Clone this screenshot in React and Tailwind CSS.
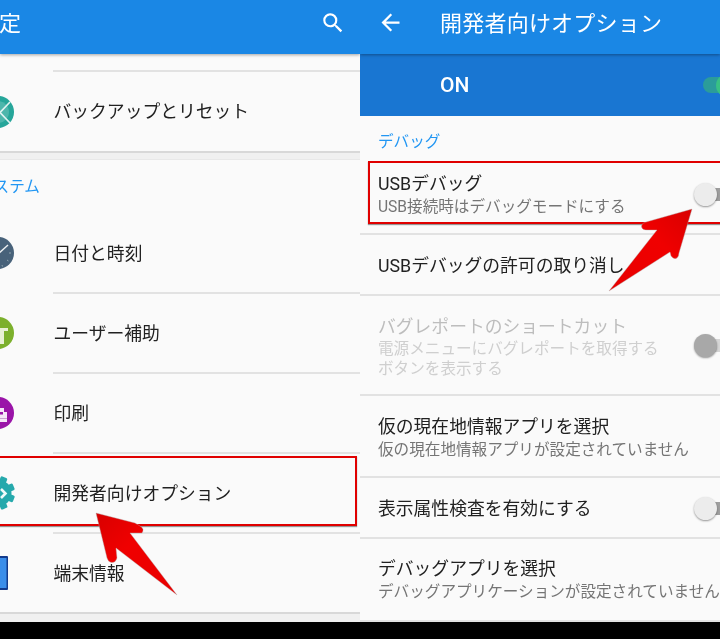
const font = { fontFamily: '"Roboto", "Noto Sans CJK JP", sans-serif' };

function BackupIcon() {
  return (
    <svg viewBox="0 0 32 32" className="w-8 h-8 shrink-0">
      <circle cx="16" cy="16" r="16" fill="#26a69a" />
      <circle cx="16" cy="16" r="11" fill="#4db6ac" />
      <path d="M8 6 L28 27 M28 6 L8 27" stroke="#e0f2f1" strokeWidth="1.6" />
    </svg>
  );
}

function ClockIcon() {
  return (
    <svg viewBox="0 0 32 32" className="w-8 h-8 shrink-0">
      <circle cx="16" cy="16" r="16" fill="#48627a" />
      <path d="M15 18 L26 8" stroke="#eceff1" strokeWidth="1.4" />
      <path d="M15 18 L10 12" stroke="#cfd8dc" strokeWidth="1.4" />
      <path d="M27 16 h2 M25 23 l1.5 1 M20 28 l.5 1.5" stroke="#90a4ae" strokeWidth="1" />
    </svg>
  );
}

function AccessIcon() {
  return (
    <svg viewBox="0 0 32 32" className="w-8 h-8 shrink-0">
      <circle cx="16" cy="16" r="16" fill="#7cb02c" />
      <path d="M6 11 H26 V14 H22 V27 H12 V14 H6 Z" fill="#e8f0d4" />
    </svg>
  );
}

function PrintIcon() {
  return (
    <svg viewBox="0 0 32 32" className="w-8 h-8 shrink-0">
      <circle cx="16" cy="16" r="16" fill="#9a14a8" />
      <path d="M11 11 H22 V15 H25 V25 H7 V15 H11 Z" fill="#f5e6f7" />
      <rect x="13" y="15" width="8" height="2.5" fill="#9a14a8" />
      <rect x="7" y="21" width="18" height="1" fill="#c9a0d0" />
    </svg>
  );
}

function DevIcon() {
  return (
    <svg viewBox="-1 -1 34 34" className="w-[34px] h-[34px] -m-px shrink-0">
      <circle cx="16" cy="16" r="13.5" fill="#26a9ac" />
      {[0, 45, 90, 135].map((deg) => (
        <rect key={deg} x="12.5" y="-1" width="7" height="34" rx="1.5" fill="#26a9ac" transform={`rotate(${deg + 22} 16 16)`} />
      ))}
      <path d="M19 12 L23.5 16.5 L19 21" fill="none" stroke="#f0fafa" strokeWidth="2.6" />
    </svg>
  );
}

function TabletIcon() {
  return (
    <svg viewBox="0 0 32 34" className="w-8 h-[34px] shrink-0">
      <rect x="0" y="0" width="26" height="34" rx="1" fill="#123a8c" />
      <rect x="0" y="2" width="24.5" height="30" fill="#3a8eea" />
    </svg>
  );
}

function Section({ children }) {
  return <div className="text-[15.6px] text-[#2196f3]">{children}</div>;
}

function MenuRow({ icon, label, height = "h-[78px]" }) {
  return (
    <div className={`${height} shrink-0 flex items-center`}>
      <div className="-ml-[18px] mr-[39.5px]">{icon}</div>
      <div className="pt-0.5 text-[17.8px] text-[#212121]">{label}</div>
    </div>
  );
}

function Divider() {
  return <div className="ml-[53px] h-0.5 shrink-0 bg-[#e2e2e2]" />;
}

function Toggle({ thumb = "bg-[#ececec]", track = "bg-[#9e9e9e]" }) {
  return (
    <div className="relative w-[30px] h-[23px] -mr-1 shrink-0">
      <div className={`absolute left-3 right-0 top-[5px] h-[13px] ${track}`} />
      <div className={`absolute left-0 top-0 w-[23px] h-[23px] rounded-full shadow-[0_1px_2px_rgba(0,0,0,0.4)] ${thumb}`} />
    </div>
  );
}

function OnToggle() {
  return (
    <div className="relative w-[17px] h-[23px] shrink-0">
      <div className="absolute left-0 right-0 top-[3px] h-4 rounded-l-full bg-[#2b9c9a]" />
      <div className="absolute left-[13px] top-0 w-[23px] h-[23px] rounded-full bg-[#38c184]" />
    </div>
  );
}

function LeftPanel() {
  return (
    <div className="relative w-[360px] h-full overflow-hidden bg-[#fafafa] flex flex-col">
      <header className="relative z-10 h-[54px] shrink-0 bg-[#1a87e5] flex items-center justify-between pr-[14px] shadow-[0_1px_3px_rgba(0,0,0,0.35)]">
        <span className="-ml-[23px] text-[22px] text-white pb-2">設定</span>
        <svg viewBox="0 0 24 24" className="w-[26px] h-[26px] fill-white mb-[8px]">
          <path d="M15.5 14h-.79l-.28-.27A6.471 6.471 0 0 0 16 9.5 6.5 6.5 0 1 0 9.5 16c1.61 0 3.09-.59 4.23-1.57l.27.28v.79l5 4.99L20.49 19l-4.99-5zm-6 0C7.01 14 5 11.99 5 9.5S7.01 5 9.5 5 14 7.01 14 9.5 11.99 14 9.5 14z" />
        </svg>
      </header>
      <div className="h-4 shrink-0" />
      <Divider />
      <MenuRow icon={<BackupIcon />} label="バックアップとリセット" height="h-[79px]" />
      <div className="h-[9px] shrink-0 bg-[#f0f0f0] border-t-2 border-[#d8d8d8] border-b border-b-[#e8e8e8]" />
      <div className="h-[54px] shrink-0 flex items-center pt-0.5 -ml-[22px]">
        <Section>システム</Section>
      </div>
      <MenuRow icon={<ClockIcon />} label="日付と時刻" />
      <Divider />
      <MenuRow icon={<AccessIcon />} label="ユーザー補助" />
      <Divider />
      <MenuRow icon={<PrintIcon />} label="印刷" />
      <Divider />
      <MenuRow icon={<DevIcon />} label="開発者向けオプション" />
      <Divider />
      <MenuRow icon={<TabletIcon />} label="端末情報" />
      <div className="h-[10px] shrink-0 bg-[#f0f0f0] border-t-2 border-[#d8d8d8]" />
      <div className="flex-1 bg-black" />
      <div className="absolute -left-1 top-[456px] w-[361px] h-[70px] border-2 border-[#e00000] shadow-[0_1px_1px_rgba(0,0,0,0.4)]" />
      <svg viewBox="0 0 100 100" className="absolute left-[90px] top-[508px] w-[100px] h-[100px]">
        <defs>
          <linearGradient id="arrowLeft" x1="0" y1="0" x2="1" y2="1">
            <stop offset="0" stopColor="#d80000" />
            <stop offset="0.4" stopColor="#f00000" />
            <stop offset="1" stopColor="#e80000" />
          </linearGradient>
        </defs>
        <path
          d="M6 5 L45 15 L50 18 Q55 21 52 25 L40 25 L87 87 L26 40 L27 50 Q25 56 20 54 Q18 53 17 50 Z"
          fill="url(#arrowLeft)"
          stroke="#b0b0b0"
          strokeWidth="0.4"
        />
      </svg>
    </div>
  );
}

function SettingRow({ title, sub, right, className, subGap = "mt-0.5", disabled = false }) {
  return (
    <div className={`shrink-0 flex justify-between pl-[18px] border-b-2 border-[#e2e2e2] ${className}`}>
      <div>
        <div className={`text-[17.8px] leading-[22px] ${disabled ? "text-[#bdbdbd]" : "text-[#212121]"}`}>{title}</div>
        {sub && (
          <div className={`${subGap} text-[15.6px] leading-5 ${disabled ? "text-[#cfcfcf]" : "text-[#757575]"}`}>
            {sub.map((line) => (
              <div key={line} className="whitespace-nowrap">{line}</div>
            ))}
          </div>
        )}
      </div>
      {right}
    </div>
  );
}

function RightPanel() {
  return (
    <div className="relative w-[360px] h-full overflow-hidden bg-[#fafafa] flex flex-col">
      <header className="relative z-10 h-[54px] shrink-0 bg-[#1a87e5] flex items-center shadow-[0_1px_3px_rgba(0,0,0,0.35)]">
        <svg viewBox="0 0 24 24" className="w-[27px] h-[27px] fill-white ml-[17px] mb-[9px]">
          <path d="M20 11H7.83l5.59-5.59L12 4l-8 8 8 8 1.41-1.41L7.83 13H20v-2z" />
        </svg>
        <span className="ml-9 text-[22px] tracking-[0.01em] text-white pb-[7px]">開発者向けオプション</span>
      </header>
      <div className="h-[62px] shrink-0 bg-[#1976d2] flex items-center justify-between pl-20">
        <span className="pt-0.5 text-[21px] font-medium text-white">ON</span>
        <OnToggle />
      </div>
      <div className="h-[45px] shrink-0 flex items-end pb-[7px] pl-[18px]">
        <Section>デバッグ</Section>
      </div>
      <SettingRow
        title="USBデバッグ"
        sub={["USB接続時はデバッグモードにする"]}
        className="h-[74px] pt-3"
        right={<div className="mt-2.5"><Toggle /></div>}
      />
      <SettingRow title="USBデバッグの許可の取り消し" className="h-[61px] items-center pt-0.5" />
      <SettingRow
        title="バグレポートのショートカット"
        sub={["電源メニューにバグレポートを取得する", "ボタンを表示する"]}
        subGap="mt-px"
        className="h-[100px] pt-5"
        disabled
        right={<div className="mt-[18px]"><Toggle thumb="bg-[#a8a8a8]" track="bg-[#d6d6d6]" /></div>}
      />
      <SettingRow
        title="仮の現在地情報アプリを選択"
        sub={["仮の現在地情報アプリが設定されていません"]}
        className="h-[82px] pt-5"
      />
      <SettingRow
        title="表示属性検査を有効にする"
        className="h-[61px] items-center pt-0.5"
        right={<Toggle />}
      />
      <SettingRow
        title="デバッグアプリを選択"
        sub={["デバッグアプリケーションが設定されていません"]}
        className="h-[83px] pt-[19px]"
      />
      <div className="flex-1 bg-black" />
      <div className="absolute left-[8px] top-[161px] w-[360px] h-[63px] border-2 border-[#e00000] shadow-[0_1px_1px_rgba(0,0,0,0.4)]" />
      <svg viewBox="0 0 100 100" className="absolute left-[245px] top-[205px] w-[100px] h-[100px]">
        <defs>
          <linearGradient id="arrowRight" x1="1" y1="0" x2="0" y2="1">
            <stop offset="0" stopColor="#d80000" />
            <stop offset="0.4" stopColor="#f00000" />
            <stop offset="1" stopColor="#e80000" />
          </linearGradient>
        </defs>
        <path
          d="M87 4 L41 17 Q35 19 37 23 Q38 25 42 25 L52 25 L4 86 L65 47 L66 51 Q69 55 72 53 Q74 51 74 48 Z"
          fill="url(#arrowRight)"
          stroke="#b0b0b0"
          strokeWidth="0.4"
        />
      </svg>
    </div>
  );
}

export default function App() {
  return (
    <div className="flex w-[720px] h-[639px] overflow-hidden bg-black blur-[0.35px]" style={font}>
      <LeftPanel />
      <RightPanel />
    </div>
  );
}
